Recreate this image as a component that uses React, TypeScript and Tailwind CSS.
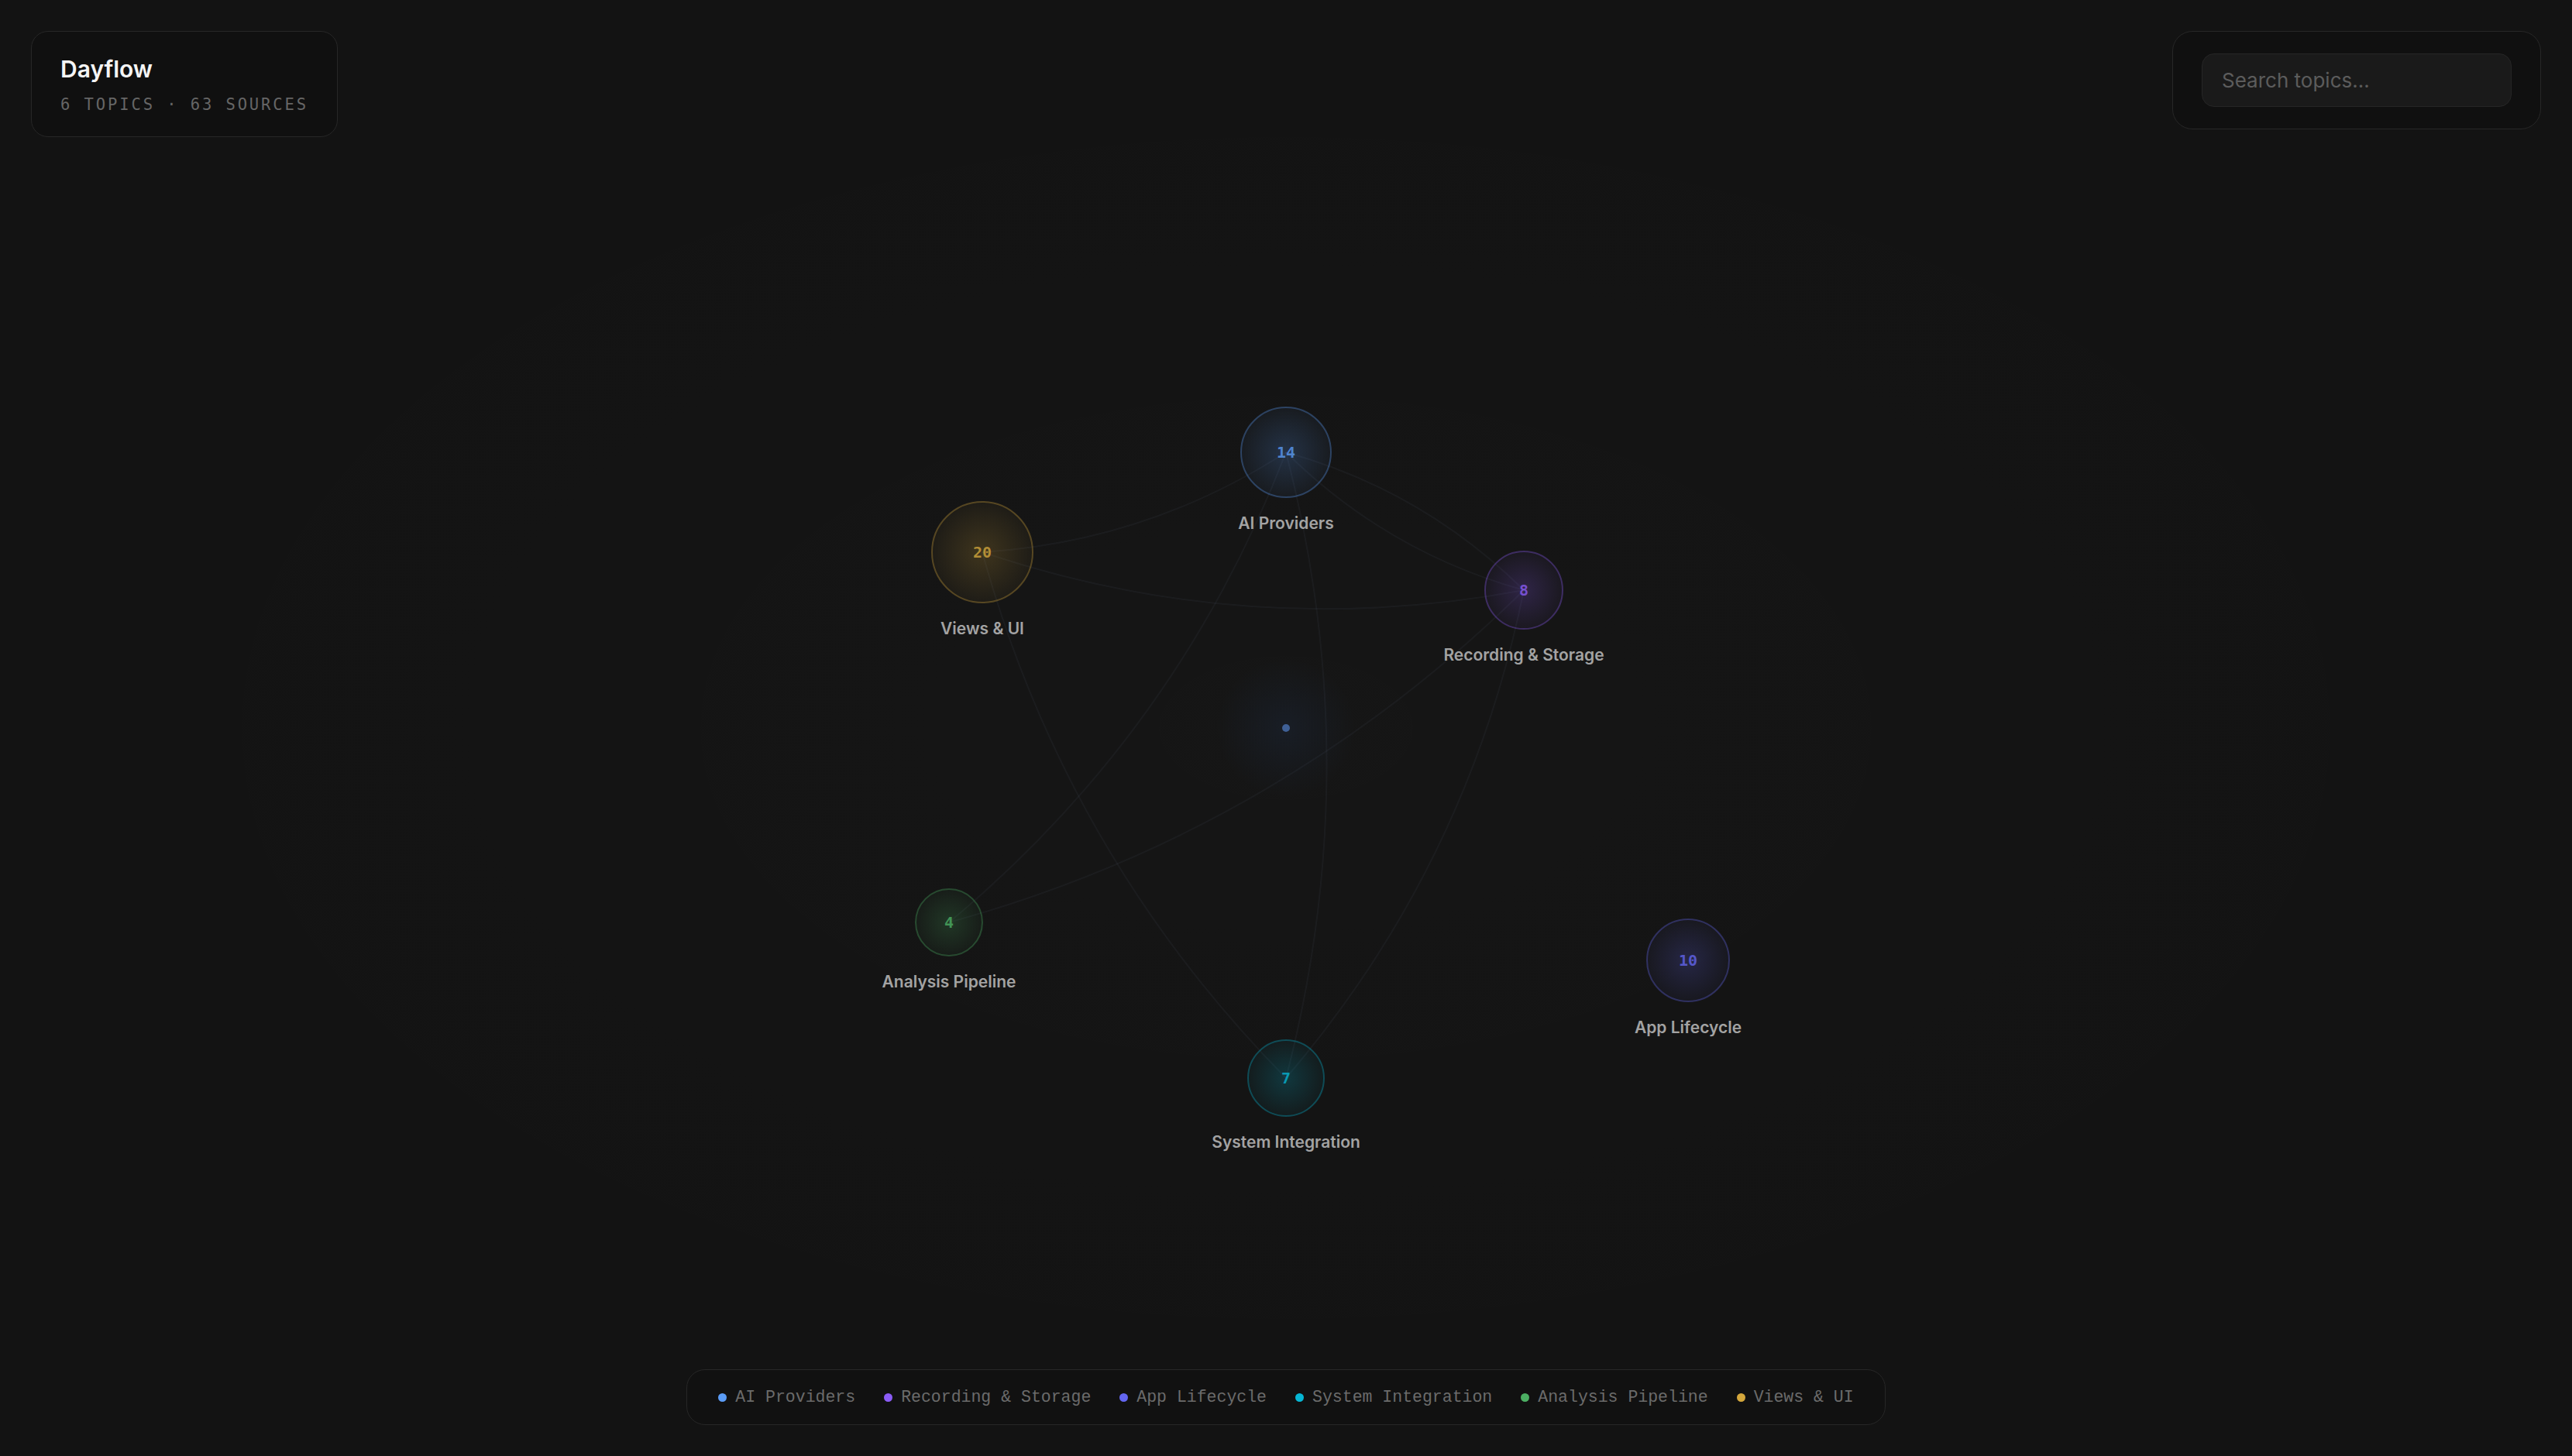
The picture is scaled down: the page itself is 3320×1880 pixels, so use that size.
import { Fragment } from "react";

type Topic = {
  id: string;
  label: string;
  count: number;
  x: number;
  y: number;
  r: number;
  color: string;
};

// positions are relative to the canvas centre
const topics: Topic[] = [
  { id: "ai", label: "AI Providers", count: 14, x: 0, y: -356, r: 58, color: "#5b9cf6" },
  { id: "rec", label: "Recording & Storage", count: 8, x: 307, y: -178, r: 50, color: "#8b5cf6" },
  { id: "app", label: "App Lifecycle", count: 10, x: 519, y: 300, r: 53, color: "#6366f1" },
  { id: "system", label: "System Integration", count: 7, x: 0, y: 452, r: 49, color: "#06b6d4" },
  { id: "analysis", label: "Analysis Pipeline", count: 4, x: -435, y: 251, r: 43, color: "#4caf63" },
  { id: "views", label: "Views & UI", count: 20, x: -392, y: -227, r: 65, color: "#d4a73c" },
];

const links: [string, string][] = [
  ["views", "ai"],
  ["views", "rec"],
  ["ai", "rec"],
  ["rec", "ai"],
  ["analysis", "ai"],
  ["system", "ai"],
  ["views", "system"],
  ["system", "rec"],
  ["analysis", "rec"],
];

const byId = Object.fromEntries(topics.map((t) => [t.id, t]));

function curve(a: Topic, b: Topic) {
  const dx = b.x - a.x;
  const dy = b.y - a.y;
  const len = Math.hypot(dx, dy);
  const bend = len * 0.13;
  const cx = (a.x + b.x) / 2 + (-dy / len) * bend;
  const cy = (a.y + b.y) / 2 + (dx / len) * bend;
  return `M${a.x},${a.y} Q${cx},${cy} ${b.x},${b.y}`;
}

function Graph() {
  return (
    <svg
      className="absolute inset-0 h-full w-full"
      viewBox="-1660 -940 3320 1880"
      aria-hidden
    >
      <defs>
        {topics.map((t) => (
          <radialGradient key={t.id} id={`fill-${t.id}`}>
            <stop offset="0%" stopColor={t.color} stopOpacity={0.22} />
            <stop offset="100%" stopColor={t.color} stopOpacity={0.05} />
          </radialGradient>
        ))}
        <radialGradient id="core-glow">
          <stop offset="0%" stopColor="#3b82f6" stopOpacity={0.07} />
          <stop offset="100%" stopColor="#3b82f6" stopOpacity={0} />
        </radialGradient>
      </defs>

      {links.map(([s, t]) => (
        <path
          key={`${s}-${t}`}
          d={curve(byId[s], byId[t])}
          fill="none"
          stroke="#9fb4d0"
          strokeOpacity={0.05}
          strokeWidth={2}
        />
      ))}

      {/* centre marker */}
      <circle cx={0} cy={0} r={90} fill="url(#core-glow)" />
      <circle cx={0} cy={0} r={5} fill="#3f6096" />

      {topics.map((t) => (
        <Fragment key={t.id}>
          <circle
            cx={t.x}
            cy={t.y}
            r={t.r}
            fill={`url(#fill-${t.id})`}
            stroke={t.color}
            strokeOpacity={0.33}
            strokeWidth={2}
          />
          <text
            x={t.x}
            y={t.y + 7}
            textAnchor="middle"
            fill={t.color}
            fillOpacity={0.78}
            fontSize={20}
            fontWeight={700}
            fontFamily='"DejaVu Sans Mono", monospace'
          >
            {t.count}
          </text>
          <text
            x={t.x}
            y={t.y + t.r + 41}
            textAnchor="middle"
            fill="#a3a3a3"
            fontSize={21}
            fontWeight={600}
            fontFamily="Inter, sans-serif"
          >
            {t.label}
          </text>
        </Fragment>
      ))}
    </svg>
  );
}

export default function App() {
  return (
    <div className="relative h-screen w-full overflow-hidden bg-[#131313] font-['Inter',sans-serif]">
      <div className="absolute inset-0 bg-[radial-gradient(ellipse_at_center,rgba(255,255,255,0.012),transparent_70%)]" />
      <Graph />

      <div className="relative flex h-full flex-col justify-between p-10 pointer-events-none">
        {/* Header */}
        <div className="flex items-start justify-between">
          <div className="pointer-events-auto rounded-[22px] border border-[#272727] bg-[#101010] px-[37px] pt-[30px] pb-[27px]">
            <h1 className="text-[30px] leading-[36px] font-semibold text-[#f5f5f5]">Dayflow</h1>
            <p className="mt-[14px] font-['DejaVu_Sans_Mono',monospace] text-[20.5px] leading-[28px] tracking-[2.9px] text-[#666666]">
              6 TOPICS · 63 SOURCES
            </p>
          </div>

          <div className="pointer-events-auto rounded-[26px] border border-[#272727] bg-[#101010] px-[37px] py-[28px]">
            <input
              type="text"
              placeholder="Search topics..."
              className="h-[69px] w-[400px] rounded-[16px] border border-[#262626] bg-[#1a1a1a] px-[25px] text-[26px] text-[#d4d4d4] outline-none placeholder:text-[#5c5c5c]"
            />
          </div>
        </div>

        {/* Legend */}
        <div className="flex justify-center">
          <div className="pointer-events-auto flex h-[72px] items-center gap-[37px] rounded-[24px] border border-[#272727] bg-[#111111] px-[40px]">
            {topics.map((t) => (
              <div key={t.id} className="flex items-center gap-[11px]">
                <span
                  className="h-[11px] w-[11px] rounded-full"
                  style={{ backgroundColor: t.color }}
                />
                <span className="font-['Liberation_Mono',monospace] text-[21.5px] text-[#6b6b6b]">
                  {t.label}
                </span>
              </div>
            ))}
          </div>
        </div>
      </div>
    </div>
  );
}
